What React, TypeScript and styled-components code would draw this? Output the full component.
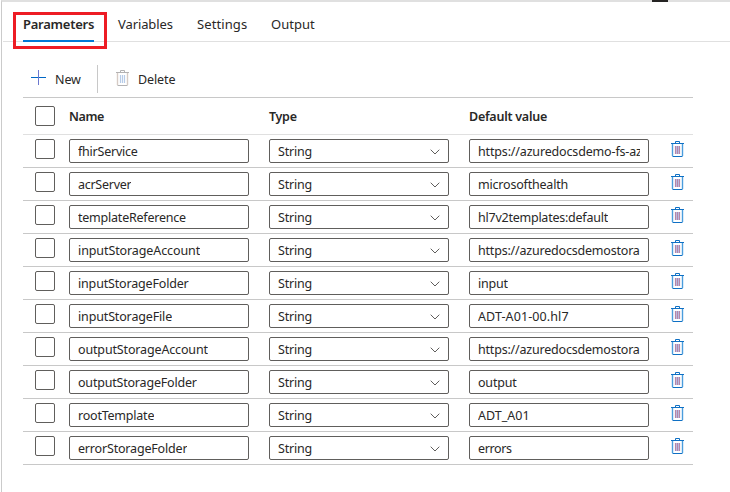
import React from "react";
import styled, { createGlobalStyle } from "styled-components";

const GlobalStyle = createGlobalStyle`
  * { box-sizing: border-box; }
  body {
    margin: 0;
    background: #fff;
    color: #292827;
    font-family: "Noto Sans", "Open Sans", sans-serif;
    font-size: 12.5px;
    line-height: 18px;
  }
`;

const Page = styled.div`
  position: relative;
  width: 730px;
  height: 492px;
  padding-left: 1px;
  overflow: hidden;
`;

const Panel = styled.main`
  height: 492px;
  border-left: 1px solid #cbcbcb;
  border-top: 2px solid #e0e0e0;
`;

const SplitterHandle = styled.div`
  position: absolute;
  top: 0;
  left: 652px;
  width: 16px;
  height: 2px;
  background: #252423;
`;

const TabBar = styled.nav`
  display: flex;
  gap: 24px;
  height: 40px;
  margin-left: 1px;
  padding-left: 20px;
  border-bottom: 1px solid #e0e0e0;
`;

const Tab = styled.button<{ $width: number; $active?: boolean; $tracking?: number }>`
  width: ${(p) => p.$width}px;
  height: 40px;
  padding: 3px 0 0;
  border: 0;
  background: none;
  color: inherit;
  font: inherit;
  font-size: 13px;
  font-weight: ${(p) => (p.$active ? 600 : 400)};
  letter-spacing: ${(p) => p.$tracking ?? 0}px;
  text-align: left;
  white-space: nowrap;
  box-shadow: ${(p) => (p.$active ? "inset 0 -2px #0078d4" : "none")};
`;

const Highlight = styled.div`
  position: absolute;
  top: 12px;
  left: 13px;
  width: 94px;
  height: 37px;
  border: 3px solid #ed1c24;
`;

const Content = styled.section`
  width: 670px;
  margin-left: 21px;
`;

const Toolbar = styled.div`
  display: flex;
  align-items: center;
  height: 56px;
  padding: 18px 0 0 8px;
  border-bottom: 1px solid #c8c8c8;
`;

const ToolButton = styled.button<{ $gap: number }>`
  display: flex;
  align-items: center;
  gap: ${(p) => p.$gap}px;
  height: 28px;
  padding: 0;
  border: 0;
  background: none;
  color: inherit;
  font: inherit;
  letter-spacing: -0.1px;

  svg {
    margin: 0 0 2px;
  }
`;

const ToolLabel = styled.span`
  padding-top: 2px;
`;

const PrimaryTools = styled.div`
  display: flex;
  width: 67px;
  margin-right: 18px;
  border-right: 1px solid #c8c8c8;
`;

const Row = styled.div<{ $header?: boolean }>`
  display: grid;
  grid-template-columns: 46px 200px 200px 202px 14px;
  align-items: ${(p) => (p.$header ? "center" : "start")};
  height: ${(p) => (p.$header ? 37 : 33)}px;
  padding-top: ${(p) => (p.$header ? 0 : 4)}px;
  border-bottom: 1px solid ${(p) => (p.$header ? "#e0e0e0" : "#c8c8c8")};
`;

const HeaderCell = styled.span<{ $tracking: number }>`
  padding-top: 1px;
  font-weight: 600;
  letter-spacing: ${(p) => p.$tracking}px;
`;

const Checkbox = styled.span`
  width: 20px;
  height: 20px;
  margin-left: 12px;
  border: 1px solid #605e5c;
  border-radius: 2px;
`;

const Field = styled.div`
  display: flex;
  align-items: center;
  justify-content: space-between;
  width: 180px;
  height: 24px;
  padding: 1px 8px 0;
  border: 1px solid #605e5c;
  border-radius: 2px;
`;

const FieldText = styled.span<{ $tracking: number }>`
  overflow: hidden;
  letter-spacing: ${(p) => p.$tracking}px;
  white-space: nowrap;
`;

const Icon = styled.svg`
  display: block;
  flex: none;
`;

const TrashIcon = styled(Icon)`
  margin-top: 2px;
`;

function Trash({ muted = false }: { muted?: boolean }) {
  const color = muted ? "#b3b2b3" : "#0f70c4";
  const side = muted ? "#d6cbc5" : "#4a9ddd";
  const bars = muted ? "#b7cce8" : "#b586a8";
  return (
    <TrashIcon width="13" height="16" viewBox="0 0 13 16" fill="none">
      {!muted && <path d="M4 5h5v8H4z" fill="#b9c6ee" />}
      <path d="M0 2.5h13M1.5 15.5h10" stroke={color} />
      <path d="M4.5 2V.5h4V2" stroke={color} />
      <path d="M1.5 3v12M11.5 3v12" stroke={side} strokeWidth="1.4" />
      <path d="M4.5 5v8M6.5 5v8M8.5 5v8" stroke={bars} strokeWidth="1.2" />
    </TrashIcon>
  );
}

function Plus() {
  return (
    <Icon width="16" height="16" viewBox="0 0 16 16">
      <path d="M0 7.5h15" stroke="#0067c5" />
      <path d="M7.5 0v15" stroke="#6c78cf" />
    </Icon>
  );
}

function Chevron() {
  return (
    <Icon width="10" height="6" viewBox="0 0 10 6" fill="none">
      <path d="M.7.7 5 5 9.3.7" stroke="#605e5c" />
    </Icon>
  );
}

type Text = [text: string, tracking: number];

const rows: { name: Text; value: Text }[] = [
  { name: ["fhirService", -0.22], value: ["https://azuredocsdemo-fs-az", -0.16] },
  { name: ["acrServer", -0.27], value: ["microsofthealth", -0.2] },
  { name: ["templateReference", -0.22], value: ["hl7v2templates:default", -0.24] },
  { name: ["inputStorageAccount", -0.1], value: ["https://azuredocsdemostora", -0.2] },
  { name: ["inputStorageFolder", -0.17], value: ["input", -0.2] },
  { name: ["inputStorageFile", -0.15], value: ["ADT-A01-00.hl7", 0.1] },
  { name: ["outputStorageAccount", -0.15], value: ["https://azuredocsdemostora", -0.2] },
  { name: ["outputStorageFolder", -0.2], value: ["output", -0.2] },
  { name: ["rootTemplate", -0.22], value: ["ADT_A01", 0] },
  { name: ["errorStorageFolder", -0.18], value: ["errors", -0.35] },
];

export default function App() {
  return (
    <>
      <GlobalStyle />
      <Page>
        <Panel>
          <TabBar>
            <Tab $width={71} $active $tracking={-0.25}>Parameters</Tab>
            <Tab $width={55} $tracking={-0.1}>Variables</Tab>
            <Tab $width={50} $tracking={0.1}>Settings</Tab>
            <Tab $width={44} $tracking={0}>Output</Tab>
          </TabBar>
          <Content>
            <Toolbar>
              <PrimaryTools>
                <ToolButton $gap={8}>
                  <Plus />
                  <ToolLabel>New</ToolLabel>
                </ToolButton>
              </PrimaryTools>
              <ToolButton $gap={9}>
                <Trash muted />
                <ToolLabel>Delete</ToolLabel>
              </ToolButton>
            </Toolbar>
            <Row $header>
              <Checkbox />
              <HeaderCell $tracking={-0.4}>Name</HeaderCell>
              <HeaderCell $tracking={-0.3}>Type</HeaderCell>
              <HeaderCell $tracking={-0.25}>Default value</HeaderCell>
            </Row>
            {rows.map(({ name, value }) => (
              <Row key={name[0]}>
                <Checkbox />
                <Field>
                  <FieldText $tracking={name[1]}>{name[0]}</FieldText>
                </Field>
                <Field>
                  <FieldText $tracking={-0.2}>String</FieldText>
                  <Chevron />
                </Field>
                <Field>
                  <FieldText $tracking={value[1]}>{value[0]}</FieldText>
                </Field>
                <Trash />
              </Row>
            ))}
          </Content>
        </Panel>
        <SplitterHandle />
        <Highlight />
      </Page>
    </>
  );
}
